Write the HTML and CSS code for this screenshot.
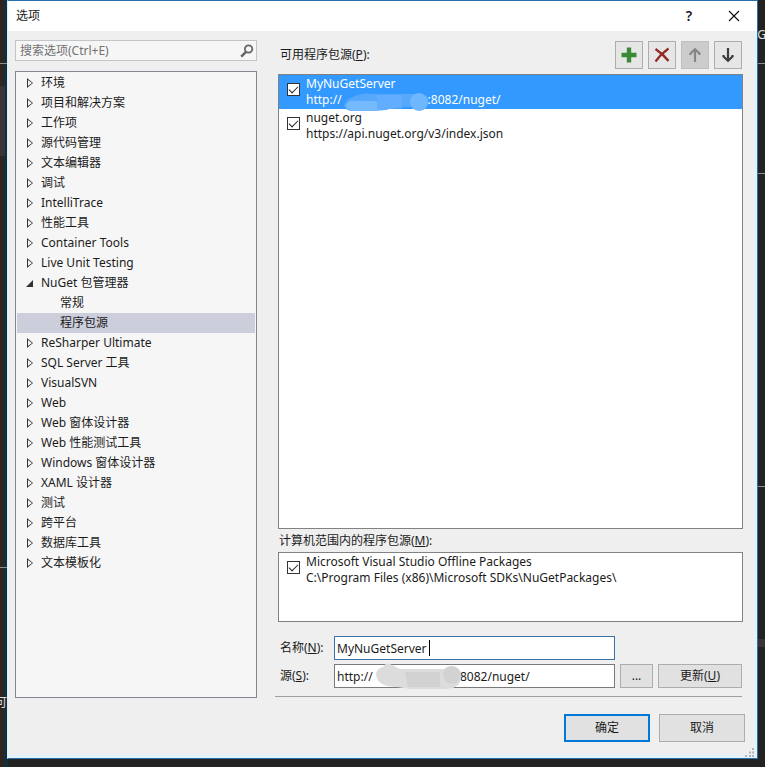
FILE: index.html
```html
<!DOCTYPE html>
<html lang="zh-CN">
<head>
<meta charset="utf-8">
<title>选项</title>
<link rel="stylesheet" href="styles.css">
</head>
<body>
<div class="backdrop" aria-hidden="true">
  <i class="line line-left-top"></i><i class="line line-left-low"></i>
  <i class="line line-right-top"></i><i class="line line-right-mid"></i><i class="line line-right-low"></i>
  <i class="pane pane-left"></i><i class="pane pane-right"></i>
  <span class="stray stray-left">可</span><span class="stray stray-right">G</span>
</div>
<main class="dialog">
  <header class="titlebar">
    <h1>选项</h1>
    <button class="caption help" type="button" aria-label="帮助">?</button>
    <button class="caption" type="button" aria-label="关闭"><svg width="12" height="12" viewBox="0 0 12 12"><path d="M1 1l10 10M11 1L1 11" stroke="#111" stroke-width="1.2" fill="none"/></svg></button>
  </header>
  <div class="content">
    <aside class="side">
      <div class="search">
        <input type="text" placeholder="搜索选项(Ctrl+E)" aria-label="搜索选项">
        <button type="button" aria-label="搜索"><svg width="14" height="14" viewBox="0 0 14 14" fill="none" stroke="#666"><circle cx="8.6" cy="5" r="3.7" stroke-width="1.8"/><path d="M6 7.8L1.2 12.6" stroke-width="2.6"/></svg></button>
      </div>
      <ul class="tree">
        <li>环境</li>
        <li>项目和解决方案</li>
        <li>工作项</li>
        <li>源代码管理</li>
        <li>文本编辑器</li>
        <li>调试</li>
        <li>IntelliTrace</li>
        <li>性能工具</li>
        <li>Container Tools</li>
        <li>Live Unit Testing</li>
        <li class="open">NuGet 包管理器
          <ul>
            <li>常规</li>
            <li class="selected">程序包源</li>
          </ul>
        </li>
        <li>ReSharper Ultimate</li>
        <li>SQL Server 工具</li>
        <li>VisualSVN</li>
        <li>Web</li>
        <li>Web 窗体设计器</li>
        <li>Web 性能测试工具</li>
        <li>Windows 窗体设计器</li>
        <li>XAML 设计器</li>
        <li>测试</li>
        <li>跨平台</li>
        <li>数据库工具</li>
        <li>文本模板化</li>
      </ul>
    </aside>
    <section class="panel">
      <div class="panel-head">
        <h2>可用程序包源(<u>P</u>):</h2>
        <button class="tool" type="button" aria-label="添加"><svg width="16" height="16" viewBox="0 0 16 16"><path d="M5.8 0.5h4.4v5.3h5.3v4.4h-5.3v5.3H5.8v-5.3H0.5V5.8h5.3z" fill="#388a34"/></svg></button>
        <button class="tool" type="button" aria-label="删除"><svg width="16" height="16" viewBox="0 0 16 16" fill="none" stroke="#922b25"><path d="M1.5 2C6 5 11 9.500 14.500 14" stroke-width="2.400"/><path d="M14.500 1.500C9 5.500 5 9.500 1.500 14.500" stroke-width="2.200"/></svg></button>
        <button class="tool" type="button" aria-label="上移" disabled><svg width="16" height="16" viewBox="0 0 16 16" fill="none" stroke="#858585" stroke-width="2.200"><path d="M8 15V3M3.500 8V6.500L8 2.300l4.500 4.200V8"/></svg></button>
        <button class="tool" type="button" aria-label="下移"><svg width="16" height="16" viewBox="0 0 16 16" fill="none" stroke="#3c3c3c" stroke-width="2.200"><path d="M8 1v12M3.500 8v1.500L8 13.700l4.500-4.200V8"/></svg></button>
      </div>
      <div class="sources available">
        <label class="source current">
          <input type="checkbox" checked>
          <span>MyNuGetServer<br>http://<span class="hidden-host"><svg class="smudge" width="90" height="20" viewBox="0 0 90 20"><path d="M2 13q2-6 9-8Q20 0 32 2h48q7 1 6 9-2 8-8 7-5-4-12-3H54l-10 3-15 1H9Q3 18 2 13z" fill="#56a8fb"/><circle cx="77" cy="10" r="9" fill="#6eb7ff"/><path d="M8 9h24l8 3-4 7H9q-9-5-1-10z" fill="#75b9ff"/><path d="M35 3h25v13l-12 1H35z" fill="#62adff"/></svg></span>:8082/nuget/</span>
        </label>
        <label class="source">
          <input type="checkbox" checked>
          <span>nuget.org<br>https://api.nuget.org/v3/index.json</span>
        </label>
      </div>
      <h2 class="machine-title">计算机范围内的程序包源(<u>M</u>):</h2>
      <div class="sources machine">
        <label class="source">
          <input type="checkbox" checked>
          <span>Microsoft Visual Studio Offline Packages<br>C:\Program Files (x86)\Microsoft SDKs\NuGetPackages\</span>
        </label>
      </div>
      <form class="fields">
        <label for="name">名称(<u>N</u>):</label>
        <div class="field"><input id="name" class="active" type="text" value="MyNuGetServer"><i class="caret"></i></div>
        <label class="source-label" for="source">源(<u>S</u>):</label>
        <div class="field"><input id="source" type="text" value="http://                            8082/nuget/">
          <svg class="field-smudge" width="88" height="28" viewBox="0 0 88 28"><path d="M1 11Q2 5 8 4q3-6 9-2l8 4h44q4-4 10-2 7 2 7 10t-8 11l-8 1H36l-14-2Q2 24 1 11z" fill="#dcdcdc"/><path d="M30 9h35v15H33z" fill="#d2d2d2"/><circle cx="77" cy="12" r="9" fill="#d2d2d2"/></svg>
        </div>
        <button class="push" type="button">...</button>
        <button class="push" type="button">更新(<u>U</u>)</button>
      </form>
      <hr>
    </section>
  </div>
  <footer class="actions">
    <button class="push default" type="button">确定</button>
    <button class="push" type="button">取消</button>
  </footer>
  <svg class="grip" width="10" height="10" viewBox="0 0 10 10" fill="#b5b5b5"><path d="M7 0h2v2H7zM4 3.500h2v2H4zM7 3.500h2v2H7zM0 7h2v2H0zM4 7h2v2H4zM7 7h2v2H7z"/></svg>
</main>
</body>
</html>
```
FILE: styles.css
```css
* { box-sizing: border-box; }

body {
  margin: 0;
  min-height: 100vh;
  padding: 0 7px 8px 7px;
  background: linear-gradient(90deg, #30241f 0 4px, #10303f 4px 8px, #222 8px);
  color: #1b1b1b;
  font: 12px/16px "Noto Sans", "Noto Sans CJK SC", sans-serif;
}

button, input { font: inherit; color: inherit; }
h1, h2 { margin: 0; font-size: 12px; font-weight: 400; }
ul { margin: 0; padding: 0; list-style: none; }
svg { display: block; }

.backdrop { position: absolute; inset: 0; overflow: hidden; }
.line { position: absolute; width: 8px; height: 1px; background: #8d8d8d; }
.line-left-top { left: 0; top: 63px; }
.line-left-low { left: 0; top: 567px; }
.line-right-top { right: 0; top: 63px; }
.line-right-mid { right: 0; top: 173px; }
.line-right-low { right: 0; top: 486px; }
.pane { position: absolute; width: 8px; height: 70px; background: #383438; }
.pane-left { left: 0; top: 86px; width: 5px; }
.pane-right { right: 0; top: 639px; height: 8px; }
.stray { position: absolute; color: #ddd; }
.stray-left { left: -5px; top: 695px; }
.stray-right { right: -1px; top: 27px; }

.dialog {
  position: relative;
  display: flex;
  flex-direction: column;
  min-height: calc(100vh - 8px);
  border: 1px solid #2a6faa;
  border-left-color: #d9effa;
  background: #efefef;
  box-shadow: inset -2px -3px #e1f3fc;
}

.titlebar { display: flex; align-items: center; height: 30px; padding: 0 9px 0 8px; background: #fff; }
.titlebar h1 { flex: 1; }
.caption {
  display: grid;
  place-items: center;
  width: 28px;
  height: 28px;
  padding: 0;
  border: 0;
  background: none;
}
.help { margin-right: 17px; font-size: 14px; font-weight: 600; }

.content { flex: 1; display: flex; gap: 18px; padding: 9px 14px 0 7px; }
.side { flex: 0 1 242px; display: flex; flex-direction: column; gap: 10px; }

.search { display: flex; height: 21px; border: 1px solid #c3c4ca; background: #f6f6f6; }
.search input { flex: 1; min-width: 0; padding: 0 4px; border: 0; background: none; outline: 0; }
.search input::placeholder { color: #717171; opacity: 1; }
.search button { padding: 0 2px; border: 0; background: none; }

.tree { flex: 1; padding: 1px; border: 1px solid #828790; background: #f6f6f6; }
.tree li { position: relative; padding-left: 24px; line-height: 20px; }
.tree > li::before,
.tree > li::after {
  content: "";
  position: absolute;
  left: 10px;
  top: 5px;
  width: 6px;
  height: 10px;
  background: #333;
  clip-path: polygon(0 0, 100% 50%, 0 100%);
}
.tree > li::after { left: 11px; top: 7px; width: 4px; height: 6px; background: #f6f6f6; }
.tree > li.open::before { left: 9px; top: 7px; width: 7px; height: 7px; clip-path: polygon(100% 0, 100% 100%, 0 100%); }
.tree > li.open::after { display: none; }
.tree ul { margin-left: -24px; }
.tree ul li { padding-left: 43px; }
.tree .selected { background: #cccedb; }

.panel { flex: 1; display: flex; flex-direction: column; min-width: 0; padding-left: 3px; }
.panel-head { display: flex; gap: 5px; height: 29px; margin-top: 1px; padding-right: 1px; }
.panel-head h2 { flex: 1; padding: 6px 2px; }
.tool {
  display: grid;
  place-items: center;
  width: 28px;
  height: 28px;
  padding: 0;
  border: 1px solid #adadad;
  background: #e6e6e6;
}
.tool:disabled { background: #ccc; border-color: #bfbfbf; }

.sources { border: 1px solid #828282; background: #fff; }
.available { flex: 1; margin-top: 4px; }
.machine { height: 70px; }
.machine-title { padding: 4px 1px 3px; }
.source { display: flex; gap: 6px; height: 34px; padding: 1px 8px; white-space: nowrap; }
.source.current { background: #3399ff; color: #fff; }

input[type="checkbox"] {
  appearance: none;
  flex: none;
  width: 13px;
  height: 13px;
  margin: 7px 0 0;
  border: 1px solid #333;
  background: #fff;
}
input[type="checkbox"]:checked::before {
  content: "";
  display: block;
  width: 8px;
  height: 4px;
  margin: 2px 1px;
  border: solid #222;
  border-width: 0 0 1px 1px;
  transform: rotate(-45deg);
}

.hidden-host { position: relative; display: inline-block; width: 86px; }
.smudge { position: absolute; left: 0; bottom: -8px; }

.fields {
  display: grid;
  grid-template-columns: 51px 1fr 33px 84px;
  column-gap: 5px;
  row-gap: 4px;
  align-items: center;
  margin-top: 14px;
  padding: 0 1px 0 2px;
}
.fields label { white-space: nowrap; }
.source-label { grid-column: 1; }
.field { position: relative; height: 24px; margin-left: -2px; }
.field input {
  width: 100%;
  height: 24px;
  padding: 0 2px;
  border: 1px solid #7a7a7a;
  background: #fff;
  outline: 0;
}
.field .active { border-color: #3874aa; }
.caret { position: absolute; left: 95px; top: 4px; width: 1px; height: 16px; background: #000; }
.field-smudge { position: absolute; left: 41px; top: -1px; }

.push { height: 24px; padding: 0; border: 1px solid #adadad; background: #e1e1e1; }
hr { width: calc(100% + 2px); margin: 8px 0 1px -3px; border: 0; border-top: 1px solid #a0a0a0; }

.actions { display: flex; justify-content: flex-end; gap: 9px; padding: 16px 12px 16px; }
.actions .push { width: 86px; height: 28px; }
.actions .default { border: 2px solid #0078d7; }
.grip { position: absolute; right: 2px; bottom: 0; }
```
